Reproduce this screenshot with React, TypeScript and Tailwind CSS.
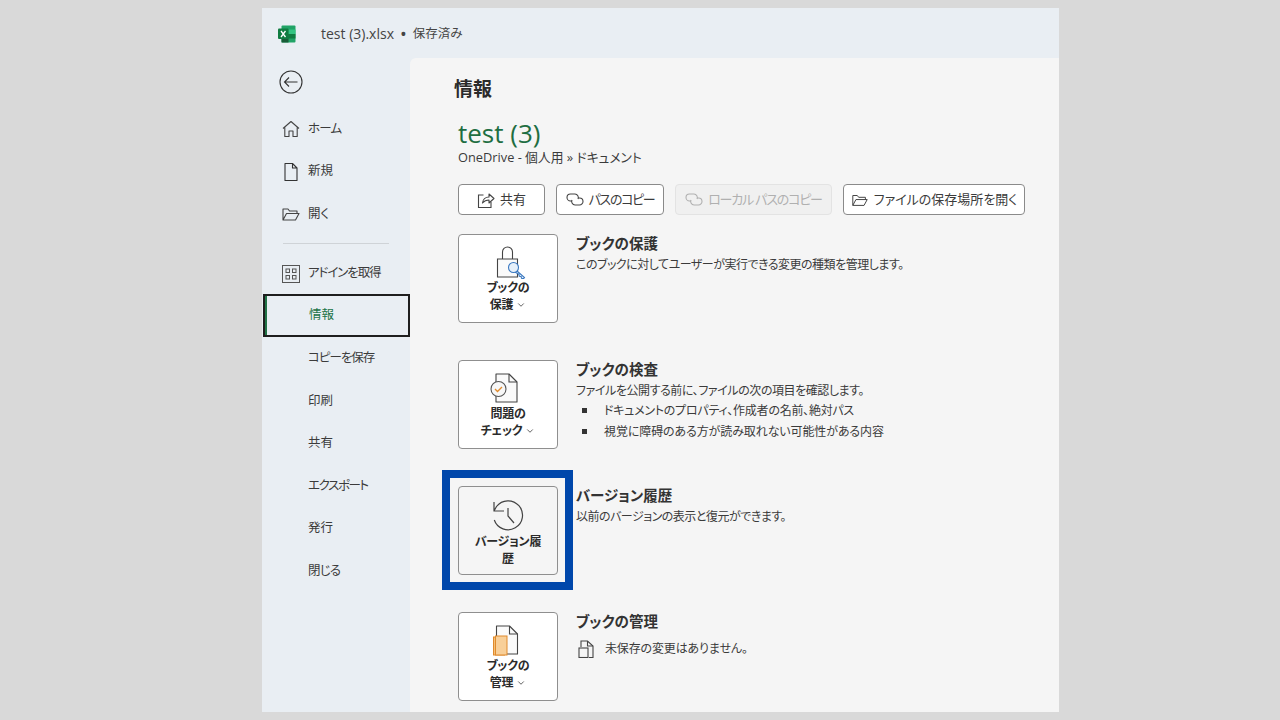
import { ChevronDown } from 'lucide-react';
import type { ReactNode } from 'react';

const FONT = 'font-["Open_Sans","Noto_Sans_CJK_JP",sans-serif] [font-feature-settings:"palt"]';

const navBottom = [
  { label: 'コピーを保存', cls: 'tracking-[-1px]' },
  { label: '印刷', cls: '' },
  { label: '共有', cls: '' },
  { label: 'エクスポート', cls: 'tracking-[-1.400px]' },
  { label: '発行', cls: '' },
  { label: '閉じる', cls: 'tracking-[-0.800px]' },
];

function HomeIcon() {
  return (
    <svg width="20" height="20" viewBox="0 0 20 20" fill="none" stroke="#444" strokeWidth="1.1">
      <path d="M2 9.5 10 2.5l8 7M3.800 8.500v9h4.200v-5.500h4v5.500h4.200v-9" strokeLinejoin="round" />
    </svg>
  );
}

function PageIcon() {
  return (
    <svg width="20" height="20" viewBox="0 0 20 20" fill="none" stroke="#333" strokeWidth="1.1">
      <path d="M4 1.500h7.500L16 6v12.500H4zM11.500 1.500V6H16" strokeLinejoin="round" />
    </svg>
  );
}

function FolderIcon({ size = 20 }: { size?: number }) {
  return (
    <svg width={size} height={size} viewBox="0 0 20 20" fill="none" stroke="#444" strokeWidth="1.1">
      <path d="M2 16V5h5l1.500 2H16v2.500M2 16h12.500L18 9.500H5.500L2 16z" strokeLinejoin="round" />
    </svg>
  );
}

function GridIcon() {
  return (
    <svg width="18" height="18" viewBox="0 0 18 18" fill="none" stroke="#555" strokeWidth="1">
      <rect x="0.5" y="0.5" width="17" height="17" />
      <rect x="4" y="4" width="3.500" height="3.500" />
      <rect x="10.500" y="4" width="3.500" height="3.500" />
      <rect x="4" y="10.500" width="3.500" height="3.500" />
      <rect x="10.500" y="10.500" width="3.500" height="3.500" />
    </svg>
  );
}

function LinkIcon({ color = '#444' }: { color?: string }) {
  return (
    <svg width="18" height="13" viewBox="0 0 18 13" fill="none" stroke={color} strokeWidth="1.1">
      <path d="M6 8H4.500a3.500 3.500 0 0 1 0-7H9a3.500 3.500 0 0 1 3 5" />
      <path d="M12 5h1.500a3.500 3.500 0 0 1 0 7H9a3.500 3.500 0 0 1-3-5" />
    </svg>
  );
}

function ShareIcon() {
  return (
    <svg width="18" height="18" viewBox="0 0 18 18" fill="none" stroke="#444" strokeWidth="1.1">
      <path d="M6.500 4H1.500v12.500h12.500V11" />
      <path d="M5.500 12c.3-3.500 3-6 6.500-6V3l5 4.500-5 4.500V9c-2.700 0-4.800 1-6.500 3z" strokeLinejoin="round" />
    </svg>
  );
}

function LockIcon() {
  return (
    <svg width="36" height="33" viewBox="0 0 36 33" fill="none">
      <path d="M12.500 13V6a5 5 0 0 1 10 0v7" stroke="#444" strokeWidth="1.1" />
      <path d="M7.500 13h20v18h-20z" fill="#fafafa" stroke="#444" strokeWidth="1.1" />
      <path d="m27 25 7.500 6.500-1 1.200-2-.4-.4-1.800-1.800-.3-.4-1.800-4-2.400" fill="#e6f0fa" stroke="#3a78c0" strokeWidth="1.1" />
      <circle cx="23.500" cy="21.500" r="5" fill="#e6f0fa" stroke="#3a78c0" strokeWidth="1.1" />
    </svg>
  );
}

function CheckDocIcon() {
  return (
    <svg width="36" height="32" viewBox="0 0 36 32" fill="none">
      <path d="M6 1h13l8 8v20H6z" fill="#fafafa" stroke="#444" strokeWidth="1.1" strokeLinejoin="round" />
      <path d="M19 1v8h8" stroke="#444" strokeWidth="1.1" />
      <circle cx="8.500" cy="16" r="7.500" fill="#f7f7f7" stroke="#555" strokeWidth="1.1" />
      <path d="m5 16 2.500 2.500 4.500-4.500" stroke="#e08a2c" strokeWidth="1.3" />
    </svg>
  );
}

function HistoryIcon() {
  return (
    <svg width="32" height="32" viewBox="0 0 32 32" fill="none" stroke="#444" strokeWidth="1.2">
      <path d="M2 3v9h10M2 12l2.500-4.500A14.500 14.500 0 1 1 2.300 21" />
      <path d="M16 9v8l6 7" />
    </svg>
  );
}

function ManageIcon() {
  return (
    <svg width="30" height="32" viewBox="0 0 30 32" fill="none">
      <path d="M3.500 1h13l8 8v20h-21z" fill="#fafafa" stroke="#444" strokeWidth="1.1" strokeLinejoin="round" />
      <path d="M16.500 1v8h8" stroke="#444" strokeWidth="1.1" />
      <rect x="0.500" y="12" width="11" height="18" fill="#f5c078" stroke="#e08a2c" />
      <rect x="2.500" y="11" width="11.500" height="19" fill="#f8cf98" stroke="#e08a2c" />
    </svg>
  );
}

function SmallDocIcon() {
  return (
    <svg width="16" height="18" viewBox="0 0 16 18" fill="none" stroke="#444" strokeWidth="1.1">
      <path d="M3 7V1h6.500L15 6v11.500H11" />
      <path d="M9.500 1v5H15" />
      <rect x="1" y="8" width="9" height="9.500" />
    </svg>
  );
}

function ExcelIcon() {
  return (
    <svg width="18" height="18" viewBox="0 0 18 18">
      <rect x="3.500" y="0.500" width="14" height="17" rx="1" fill="#21a366" />
      <rect x="3.500" y="9" width="7" height="8.500" fill="#185c37" />
      <rect x="10.500" y="9" width="7" height="4.500" fill="#107c41" />
      <rect x="10.500" y="4.500" width="7" height="4.500" fill="#33c481" />
      <rect x="0" y="3.500" width="10.500" height="10.500" rx="1" fill="#107c41" />
      <path d="m3 6 4.500 6M7.500 6 3 12" stroke="#fff" strokeWidth="1.3" />
    </svg>
  );
}

function NavItem({ icon, label, cls = '' }: { icon?: ReactNode; label: string; cls?: string }) {
  return (
    <div className="flex h-[42.5px] items-center text-[12.5px] text-[#3b3b3b]">
      <div className="flex w-[46px] justify-center pl-[12px]">{icon}</div>
      <span className={cls}>{label}</span>
    </div>
  );
}

function ToolButton({ children, disabled }: { children: ReactNode; disabled?: boolean }) {
  return (
    <div
      className={
        disabled
          ? 'flex h-[31px] items-center justify-center gap-[5px] rounded-[4px] border border-[#e3e3e3] bg-[#f0f0f0] text-[#b0b0b0]'
          : 'flex h-[31px] items-center justify-center gap-[5px] rounded-[4px] border border-[#8a8a8a] bg-white text-[#3b3b3b]'
      }
    >
      {children}
    </div>
  );
}

function BigButton({ icon, lines, chevron, flat }: { icon: ReactNode; lines: string[]; chevron?: boolean; flat?: boolean }) {
  return (
    <div
      className={`flex h-[89px] w-[100px] shrink-0 flex-col items-center rounded-[4px] border border-[#8f8f8f] ${flat ? 'bg-[#f5f5f5]' : 'bg-white'}`}
    >
      <div className="flex h-[44px] items-end justify-center">{icon}</div>
      <div className={`text-center text-[12px] font-bold leading-[17px] tracking-[-0.2px] text-[#2b2b2b] ${flat ? 'mt-[2px]' : ''}`}>
        <div>{lines[0]}</div>
        <div className="flex items-center justify-center gap-[3px]">
          {lines[1]}
          {chevron && <ChevronDown size={10} strokeWidth={2} color="#444" />}
        </div>
      </div>
    </div>
  );
}

function Heading({ children }: { children: ReactNode }) {
  return <div className="text-[14.5px] font-bold leading-[20px] text-[#333]">{children}</div>;
}

function Section({ button, children }: { button: ReactNode; children: ReactNode }) {
  return (
    <div className="flex h-[126px] gap-[18px]">
      {button}
      <div className="text-[12px] leading-[21px] text-[#3b3b3b]">{children}</div>
    </div>
  );
}

export default function App() {
  return (
    <div className={`h-[720px] w-[1280px] overflow-hidden bg-[#d9d9d9] pl-[262px] pt-[8px] ${FONT}`}>
      <div className="flex h-[704px] w-[797px] flex-col overflow-hidden bg-[#e9eef3]">
        <header className="flex h-[50px] shrink-0 items-center pl-[16px] pt-[1px] text-[12.5px] text-[#444]">
          <ExcelIcon />
          <span className="ml-[25px] text-[14px]">test (3).xlsx</span>
          <span className="mx-[6px] text-[18px] leading-none">•</span>
          <span className="pt-[1px]">保存済み</span>
        </header>
        <div className="flex min-h-0 flex-1">
          <aside className="w-[148px] shrink-0">
            <svg className="ml-[17px] mt-[12px]" width="24" height="24" viewBox="0 0 24 24" fill="none" stroke="#333" strokeWidth="1.1">
              <circle cx="12" cy="12" r="11" />
              <path d="M18.500 12H5.500M10 7.500 5.500 12l4.500 4.500" />
            </svg>
            <div className="mt-[14px]">
              <NavItem icon={<HomeIcon />} label="ホーム" cls="tracking-[-0.800px]" />
              <NavItem icon={<PageIcon />} label="新規" />
              <NavItem icon={<FolderIcon />} label="開く" />
              <div className="mx-[21px] mb-[9px] mt-[7px] h-px bg-[#cfd3d7]" />
              <NavItem icon={<GridIcon />} label="アドインを取得" cls="tracking-[-1.100px]" />
              <div className="-mt-[1px] mb-[1px] ml-[1px] flex h-[42.5px] items-center border-2 border-[#1e1e1e] pl-[44px] pt-[1px] text-[12.5px] text-[#217346] shadow-[inset_2px_0_0_#217346]">
                情報
              </div>
              {navBottom.map((item) => (
                <NavItem key={item.label} label={item.label} cls={item.cls} />
              ))}
            </div>
          </aside>
          <main className="min-w-0 flex-1 rounded-tl-[6px] bg-[#f5f5f5] pl-[43px] pt-[18px]">
            <h1 className="ml-[1px] text-[19px] font-bold leading-[26px] text-[#2b2b2b]">情報</h1>
            <div className="ml-[5px]">
              <div className="mt-[16px] text-[26px] leading-[30px] text-[#1e6e42]">test (3)</div>
              <div className="mt-[1px] text-[12.8px] leading-[17px] text-[#3b3b3b]">OneDrive - 個人用 » ドキュメント</div>
              <div className="mt-[18px] flex gap-[11px] text-[13px]">
                <div className="w-[87px]">
                  <ToolButton>
                    <ShareIcon />
                    共有
                  </ToolButton>
                </div>
                <div className="w-[108px]">
                  <ToolButton>
                    <LinkIcon />
                    <span className="tracking-[-1.300px]">パスのコピー</span>
                  </ToolButton>
                </div>
                <div className="w-[157px]">
                  <ToolButton disabled>
                    <LinkIcon color="#b0b0b0" />
                    <span className="tracking-[-1.200px]">ローカル パスのコピー</span>
                  </ToolButton>
                </div>
                <div className="w-[182px]">
                  <ToolButton>
                    <FolderIcon size={18} />
                    ファイルの保存場所を開く
                  </ToolButton>
                </div>
              </div>
              <div className="mt-[19px]">
                <Section button={<BigButton icon={<LockIcon />} lines={['ブックの', '保護']} chevron />}>
                  <Heading>ブックの保護</Heading>
                  <div className="tracking-[-0.500px]">このブックに対してユーザーが実行できる変更の種類を管理します。</div>
                </Section>
                <Section button={<BigButton icon={<CheckDocIcon />} lines={['問題の', 'チェック']} chevron />}>
                  <Heading>ブックの検査</Heading>
                  <div className="tracking-[-0.430px]">ファイルを公開する前に、ファイルの次の項目を確認します。</div>
                  <ul className="-mt-[1px]">
                    <li className="flex items-center tracking-[-0.250px]">
                      <span className="ml-[6px] mr-[17px] size-[5px] bg-[#333]" />
                      ドキュメントのプロパティ、作成者の名前、絶対パス
                    </li>
                    <li className="flex items-center tracking-[-0.100px]">
                      <span className="ml-[6px] mr-[17px] size-[5px] bg-[#333]" />
                      視覚に障碍のある方が読み取れない可能性がある内容
                    </li>
                  </ul>
                </Section>
                <Section
                  button={
                    <div className="relative shrink-0">
                      <BigButton icon={<HistoryIcon />} lines={['バージョン履', '歴']} flat />
                      <div className="absolute -left-[16px] -top-[16px] h-[120px] w-[131px] border-[8px] border-[#0047ab]" />
                    </div>
                  }
                >
                  <Heading>バージョン履歴</Heading>
                  <div className="tracking-[-0.500px]">以前のバージョンの表示と復元ができます。</div>
                </Section>
                <Section button={<BigButton icon={<ManageIcon />} lines={['ブックの', '管理']} chevron />}>
                  <Heading>ブックの管理</Heading>
                  <div className="ml-[2px] mt-[6px] flex items-center gap-[11px] tracking-[-0.150px]">
                    <SmallDocIcon />
                    未保存の変更はありません。
                  </div>
                </Section>
              </div>
            </div>
          </main>
        </div>
      </div>
    </div>
  );
}
